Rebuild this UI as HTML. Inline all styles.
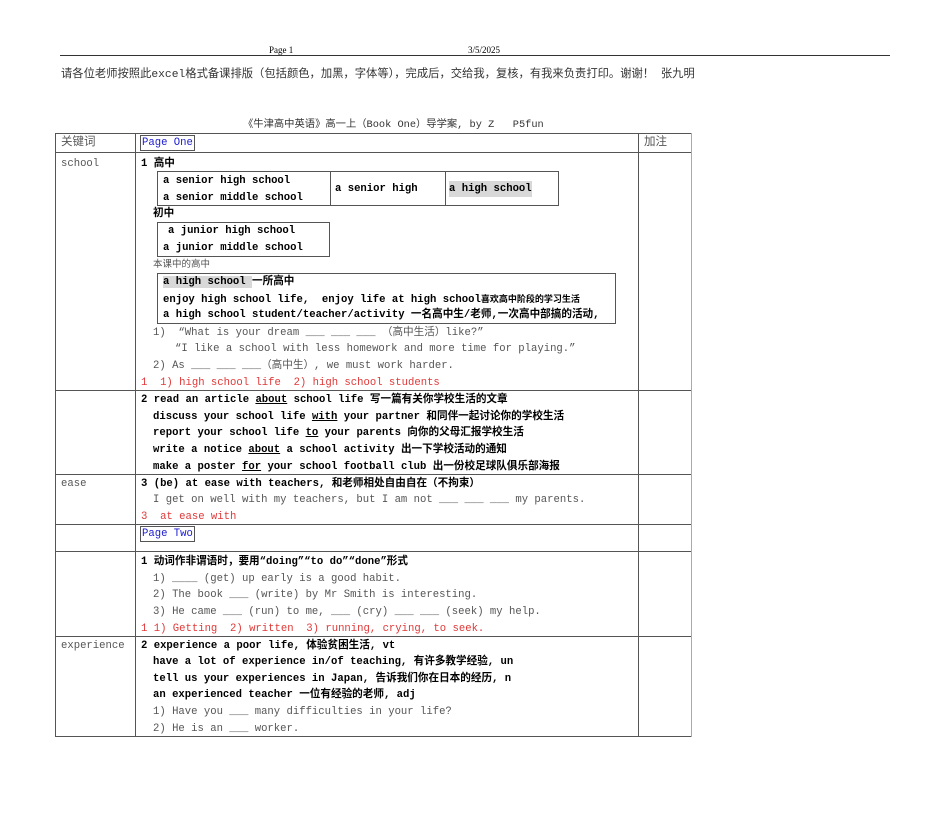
<!DOCTYPE html>
<html><head><meta charset="utf-8"><style>
body{margin:0;width:950px;height:815px;background:#fff;position:relative;overflow:hidden}
.t{position:absolute;white-space:pre;font:10.6px/16px "Liberation Mono","Noto Sans CJK SC",monospace;color:#000}
.b{font-weight:bold}
.g{color:#555}
.r{color:#e03838}
.l{position:absolute;background:#555}
.bx{position:absolute;border:1px solid #555;box-sizing:border-box}
.hl{background:#d8d8d8}
.s{font-family:"Noto Sans CJK SC",sans-serif;font-size:9px}
u{text-decoration:underline}
</style></head><body>
<div class="t" style="left:269px;top:44px;font:9px/12px 'Liberation Serif',serif">Page 1</div>
<div class="t" style="left:468px;top:44px;font:9px/12px 'Liberation Serif',serif">3/5/2025</div>
<div class="l" style="left:60px;top:55px;width:830px;height:1px;background:#333"></div>
<div class="t g" style="left:61px;top:67px;font-size:11.3px;color:#333">请各位老师按照此excel格式备课排版（包括颜色，加黑，字体等），完成后，交给我，复核，有我来负责打印。谢谢！ 张九明</div>
<div class="t g" style="left:243px;top:117px;font-size:10.3px;color:#333">《牛津高中英语》高一上（Book One）导学案, by Z   P5fun</div>

<div class="l" style="left:55px;top:133px;width:637px;height:1px"></div>
<div class="l" style="left:55px;top:152px;width:637px;height:1px"></div>
<div class="l" style="left:55px;top:390px;width:637px;height:1px"></div>
<div class="l" style="left:55px;top:474px;width:637px;height:1px"></div>
<div class="l" style="left:55px;top:524px;width:637px;height:1px"></div>
<div class="l" style="left:55px;top:551px;width:637px;height:1px"></div>
<div class="l" style="left:55px;top:636px;width:637px;height:1px"></div>
<div class="l" style="left:55px;top:736px;width:637px;height:1px"></div>
<div class="l" style="left:55px;top:133px;width:1px;height:604px"></div>
<div class="l" style="left:135px;top:133px;width:1px;height:604px"></div>
<div class="l" style="left:638px;top:133px;width:1px;height:604px"></div>
<div class="l" style="left:691px;top:133px;width:1px;height:604px;background:#aaa"></div>

<div class="t g" style="left:61px;top:135px;font-size:11.5px">关键词</div>
<div class="t g" style="left:644px;top:135px;font-size:11.5px">加注</div>
<div class="t" style="left:140px;top:135px;color:#1a1ad0;border:1px solid #555;line-height:14px;padding:0 1px">Page One</div>

<div class="t g" style="left:61px;top:156px">school</div>
<div class="t b" style="left:141px;top:156px">1 高中</div>
<div class="bx" style="left:157px;top:171px;width:402px;height:35px"></div>
<div class="l" style="left:330px;top:171px;width:1px;height:35px"></div>
<div class="l" style="left:445px;top:171px;width:1px;height:35px"></div>
<div class="t b" style="left:163px;top:173px">a senior high school</div>
<div class="t b" style="left:163px;top:190px">a senior middle school</div>
<div class="t b" style="left:335px;top:181px">a senior high</div>
<div class="t b hl" style="left:449px;top:181px">a high school</div>
<div class="t b" style="left:153px;top:206px">初中</div>
<div class="bx" style="left:157px;top:222px;width:173px;height:35px"></div>
<div class="t b" style="left:168px;top:223px">a junior high school</div>
<div class="t b" style="left:163px;top:240px">a junior middle school</div>
<div class="t g" style="left:153px;top:257px;font-size:9.5px">本课中的高中</div>
<div class="bx" style="left:157px;top:273px;width:459px;height:51px"></div>
<div class="t b" style="left:163px;top:274px"><span class="hl">a high school </span>一所高中</div>
<div class="t b" style="left:163px;top:291px">enjoy high school life,  enjoy life at high school<span class="s">喜欢高中阶段的学习生活</span></div>
<div class="t b" style="left:163px;top:307px">a high school student/teacher/activity 一名高中生/老师,一次高中部搞的活动,</div>
<div class="t g" style="left:153px;top:325px">1)  “What is your dream ___ ___ ___ （高中生活）like?”</div>
<div class="t g" style="left:175px;top:341px">“I like a school with less homework and more time for playing.”</div>
<div class="t g" style="left:153px;top:358px">2) As ___ ___ ___（高中生）, we must work harder.</div>
<div class="t r" style="left:141px;top:375px">1  1) high school life  2) high school students</div>

<div class="t b" style="left:141px;top:392px">2 read an article <u>about</u> school life 写一篇有关你学校生活的文章</div>
<div class="t b" style="left:153px;top:409px">discuss your school life <u>with</u> your partner 和同伴一起讨论你的学校生活</div>
<div class="t b" style="left:153px;top:425px">report your school life <u>to</u> your parents 向你的父母汇报学校生活</div>
<div class="t b" style="left:153px;top:442px">write a notice <u>about</u> a school activity 出一下学校活动的通知</div>
<div class="t b" style="left:153px;top:459px">make a poster <u>for</u> your school football club 出一份校足球队俱乐部海报</div>

<div class="t g" style="left:61px;top:476px">ease</div>
<div class="t b" style="left:141px;top:476px">3 (be) at ease with teachers, 和老师相处自由自在（不拘束）</div>
<div class="t g" style="left:153px;top:492px">I get on well with my teachers, but I am not ___ ___ ___ my parents.</div>
<div class="t r" style="left:141px;top:509px">3  at ease with</div>

<div class="t" style="left:140px;top:526px;color:#1a1ad0;border:1px solid #555;line-height:14px;padding:0 1px">Page Two</div>

<div class="t b" style="left:141px;top:554px">1 动词作非谓语时，要用“doing”“to do”“done”形式</div>
<div class="t g" style="left:153px;top:571px">1) ____ (get) up early is a good habit.</div>
<div class="t g" style="left:153px;top:587px">2) The book ___ (write) by Mr Smith is interesting.</div>
<div class="t g" style="left:153px;top:604px">3) He came ___ (run) to me, ___ (cry) ___ ___ (seek) my help.</div>
<div class="t r" style="left:141px;top:621px">1 1) Getting  2) written  3) running, crying, to seek.</div>

<div class="t g" style="left:61px;top:638px">experience</div>
<div class="t b" style="left:141px;top:638px">2 experience a poor life, 体验贫困生活, vt</div>
<div class="t b" style="left:153px;top:654px">have a lot of experience in/of teaching, 有许多教学经验, un</div>
<div class="t b" style="left:153px;top:671px">tell us your experiences in Japan, 告诉我们你在日本的经历, n</div>
<div class="t b" style="left:153px;top:687px">an experienced teacher 一位有经验的老师, adj</div>
<div class="t g" style="left:153px;top:704px">1) Have you ___ many difficulties in your life?</div>
<div class="t g" style="left:153px;top:721px">2) He is an ___ worker.</div>
</body></html>
